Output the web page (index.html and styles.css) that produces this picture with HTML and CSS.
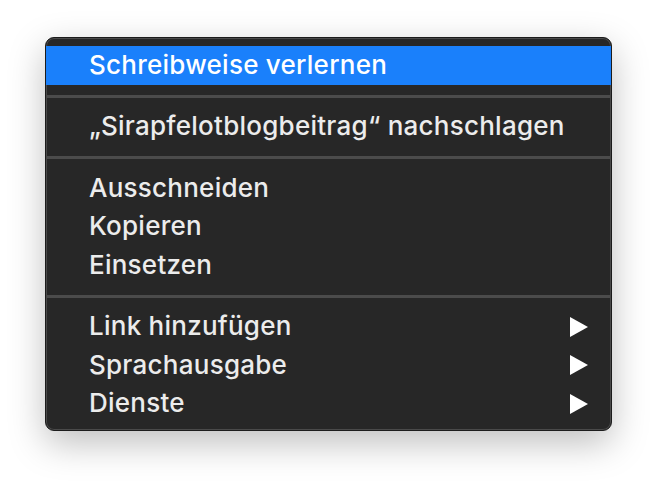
FILE: index.html
```html
<!DOCTYPE html>
<html lang="de">
<head>
<meta charset="utf-8">
<title>Kontextmenü</title>
<link rel="stylesheet" href="styles.css">
</head>
<body>
<div class="menu">
  <div class="item active">Schreibweise verlernen</div>
  <div class="sep"></div>
  <div class="item">„Sirapfelotblogbeitrag“ nachschlagen</div>
  <div class="sep"></div>
  <div class="item">Ausschneiden</div>
  <div class="item">Kopieren</div>
  <div class="item">Einsetzen</div>
  <div class="sep"></div>
  <div class="item sub"><span>Link hinzufügen</span><svg class="arrow" viewBox="0 0 18 20"><polygon points="0,0 18,10 0,20"/></svg></div>
  <div class="item sub"><span>Sprachausgabe</span><svg class="arrow" viewBox="0 0 18 20"><polygon points="0,0 18,10 0,20"/></svg></div>
  <div class="item sub"><span>Dienste</span><svg class="arrow" viewBox="0 0 18 20"><polygon points="0,0 18,10 0,20"/></svg></div>
</div>
</body>
</html>
```
FILE: styles.css
```css
html, body {
  margin: 0;
  padding: 0;
  background: #ffffff;
}
html {
  height: 100%;
}
body {
  box-sizing: border-box;
  min-height: 100%;
  padding: 37px 0 0 45px;
  font-family: Inter, "Noto Sans", "Liberation Sans", sans-serif;
}
.menu {
  box-sizing: border-box;
  width: 567px;
  padding: 8px 0 7px;
  background: #272727;
  border: 1px solid #1c1c1c;
  border-radius: 9px;
  box-shadow: inset 0 0 0 1px #4a4a4a, 0 12px 36px rgba(0, 0, 0, 0.26);
  overflow: hidden;
}
.item {
  display: flex;
  align-items: center;
  justify-content: space-between;
  height: 38.5px;
  padding: 0 23px 2px 43px;
  box-sizing: border-box;
  color: #ececec;
  font-size: 26px;
  font-weight: 500;
  letter-spacing: 0.25px;
  white-space: nowrap;
}
.item.active {
  background: #1a80fb;
  color: #ffffff;
}
.sep {
  height: 3px;
  margin: 10px 1px;
  background: #4b4b4b;
}
.arrow {
  width: 18px;
  height: 20px;
  fill: #ffffff;
  margin-top: 2px;
}
```
